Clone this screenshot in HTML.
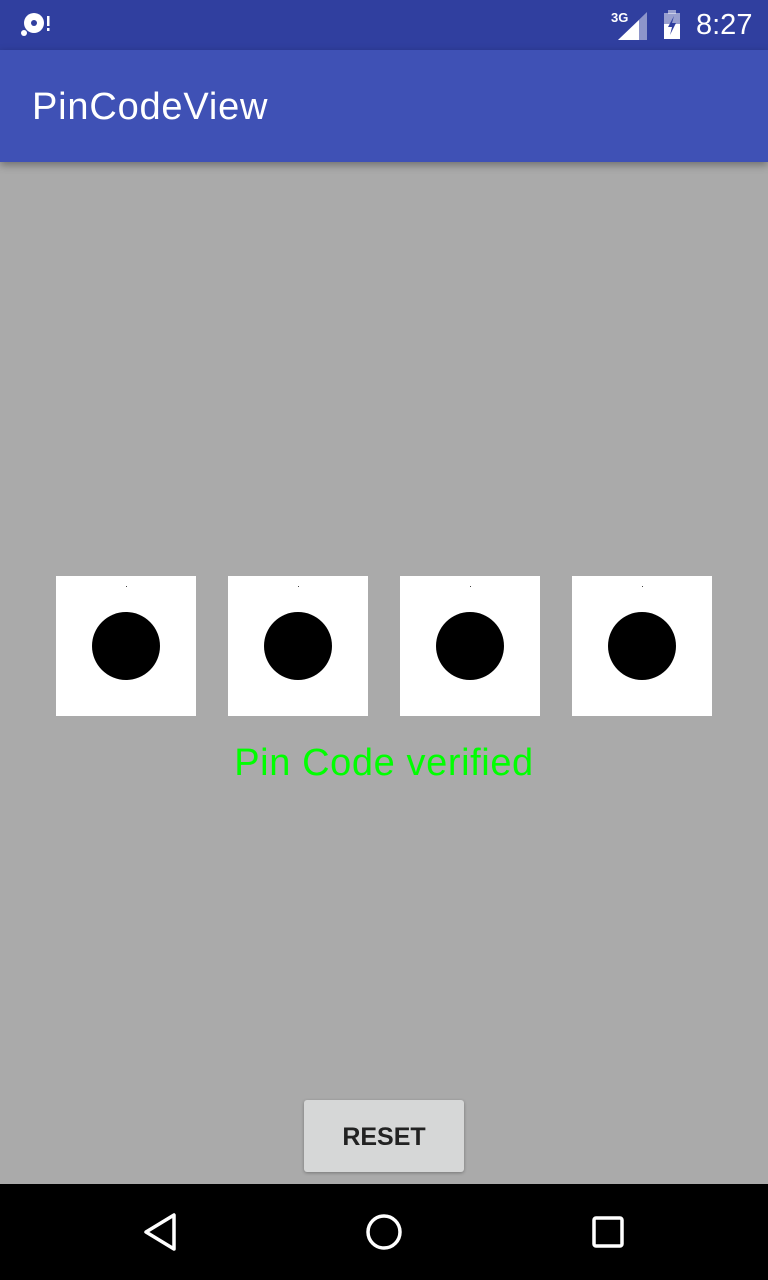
<!DOCTYPE html>
<html><head><style>
body{margin:0;width:768px;height:1280px;background:#aaaaaa;position:relative;overflow:hidden;font-family:"Liberation Sans",sans-serif}
.sb{position:absolute;top:0;left:0;width:768px;height:50px;background:#303f9f}
.ab{position:absolute;top:50px;left:0;width:768px;height:112px;background:#3f51b5;box-shadow:0 3px 8px rgba(0,0,0,.35)}
.ab span{position:absolute;left:32px;top:36px;color:#fff;font-size:38px;letter-spacing:0.8px}
.box{position:absolute;top:576px;width:140px;height:140px;background:#fff}
.box i{position:absolute;left:36px;top:36px;width:68px;height:68px;border-radius:50%;background:#000}
.box b{position:absolute;left:70px;top:10px;width:1px;height:1px;background:#444}
.msg{position:absolute;top:742px;left:0;width:768px;text-align:center;color:#00ff00;font-size:38px;letter-spacing:0.6px}
.btn{position:absolute;left:304px;top:1100px;width:160px;height:72px;background:#d6d7d7;border-radius:3px;box-shadow:0 1px 3px rgba(0,0,0,.3);text-align:center;line-height:74px;font-size:25px;font-weight:bold;color:#222}
.nav{position:absolute;top:1184px;left:0;width:768px;height:96px;background:#000}
</style></head><body>
<div class="sb">
<svg style="position:absolute;left:20px;top:12px" width="34" height="26"><circle cx="14" cy="11" r="10" fill="#fff"/><circle cx="14" cy="11" r="3" fill="#303f9f"/><circle cx="4" cy="21" r="3" fill="#fff"/><rect x="27" y="4" width="2.5" height="10" fill="#fff"/><rect x="27" y="16" width="2.5" height="3" fill="#fff"/></svg>
<span style="position:absolute;left:611px;top:10px;color:#fff;font-size:13px;font-weight:bold">3G</span>
<svg style="position:absolute;left:618px;top:12px" width="30" height="28"><polygon points="29,0 29,28 0,28" fill="#fff" opacity=".45"/><polygon points="21,8 21,28 0,28" fill="#fff"/></svg>
<svg style="position:absolute;left:662px;top:10px" width="22" height="30"><rect x="6" y="0" width="8" height="4" fill="#fff" opacity=".5"/><rect x="2" y="3" width="16" height="26" fill="#fff" opacity=".5"/><rect x="2" y="14" width="16" height="15" fill="#fff"/><polygon points="12,6 6,17 10,17 8,25 14,13 10,13" fill="#303f9f"/></svg>
<span style="position:absolute;left:696px;top:9px;color:#fff;font-size:29px">8:27</span>
</div>
<div class="ab"><span>PinCodeView</span></div>
<div class="box" style="left:56px"><b></b><i></i></div>
<div class="box" style="left:228px"><b></b><i></i></div>
<div class="box" style="left:400px"><b></b><i></i></div>
<div class="box" style="left:572px"><b></b><i></i></div>
<div class="msg">Pin Code verified</div>
<div class="btn">RESET</div>
<div class="nav">
<svg style="position:absolute;left:140px;top:28px" width="40" height="40"><polygon points="34,3 34,37 6,20" fill="none" stroke="#fff" stroke-width="3.5" stroke-linejoin="round"/></svg>
<svg style="position:absolute;left:364px;top:28px" width="40" height="40"><circle cx="20" cy="20" r="16" fill="none" stroke="#fff" stroke-width="3.5"/></svg>
<svg style="position:absolute;left:590px;top:30px" width="36" height="36"><rect x="4" y="4" width="28" height="28" rx="2" fill="none" stroke="#fff" stroke-width="3.5"/></svg>
</div>
</body></html>
